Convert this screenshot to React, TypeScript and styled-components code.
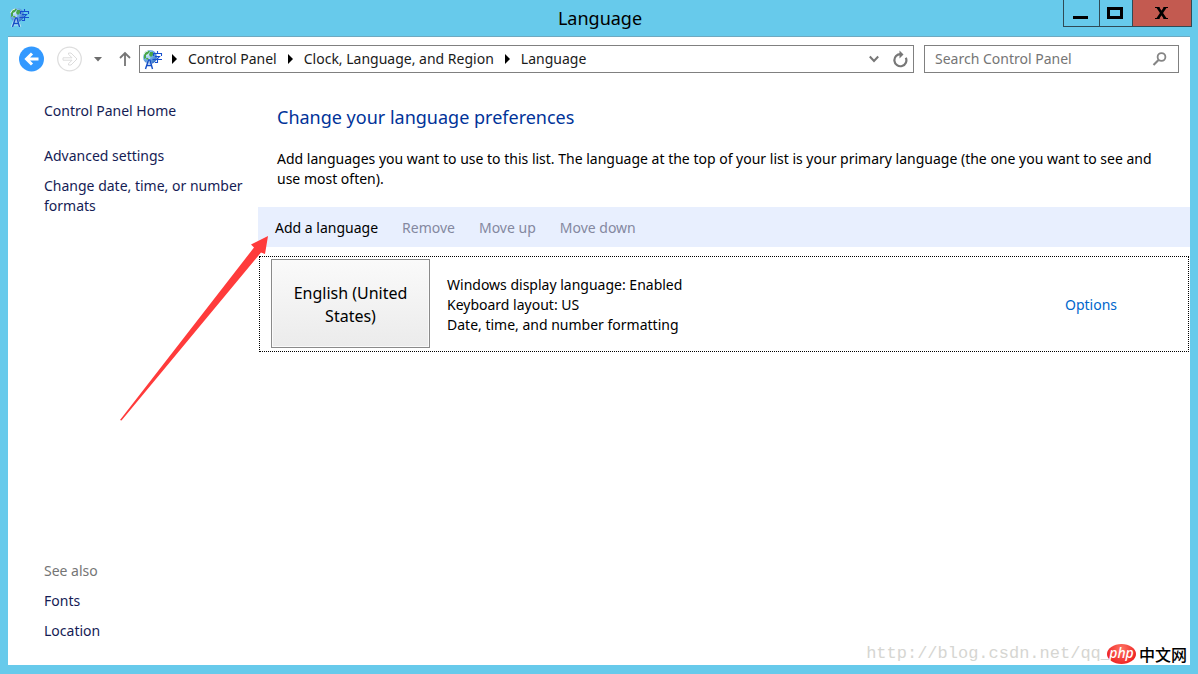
import React from "react";
import styled, { createGlobalStyle } from "styled-components";

const GlobalStyle = createGlobalStyle`
  *, *::before, *::after { box-sizing: border-box; }
  body {
    margin: 0;
    background: #67caeb;
    font-family: "Noto Sans", "Open Sans", "Noto Sans CJK SC", sans-serif;
    font-size: 14px;
    line-height: 20px;
    color: #000;
  }
  button, input { font: inherit; color: inherit; }
  button { padding: 0; border: 0; background: none; cursor: pointer; }
  p, h1, h2, ul { margin: 0; padding: 0; font-weight: 400; }
  ul { list-style: none; }
  svg { display: block; }
`;

const Window = styled.div`
  position: relative;
  display: flex;
  flex-direction: column;
  min-height: 100vh;
  padding: 0 8px 9px;
  background: #67caeb;
`;

const TitleBar = styled.header`
  display: grid;
  grid-template-columns: 1fr auto 1fr;
  align-items: start;
  height: 36px;
  margin-right: -2px;
`;

const TitleIcon = styled.div`
  padding: 7px 0 0 1px;
`;

const WindowTitle = styled.h1`
  font-size: 18px;
  line-height: 36px;
`;

const WindowControls = styled.div`
  display: flex;
  justify-self: end;
  height: 27px;
  border: 1px solid #2f4a55;
  border-top: 0;
`;

const ControlButton = styled.button<{ $width: number; $danger?: boolean }>`
  display: flex;
  align-items: center;
  justify-content: center;
  width: ${(p) => p.$width}px;
  padding-right: 2px;
  background: ${(p) => (p.$danger ? "#c35a50" : "transparent")};

  & + & { border-left: 1px solid #2f4a55; }
`;

const Panel = styled.div`
  flex: 1;
  display: flex;
  flex-direction: column;
  background: #fff;
  border-top: 1px solid #6fa9c0;
`;

const NavBar = styled.nav`
  display: flex;
  align-items: center;
  padding: 8px 11px 0;
`;

const NavButton = styled.button<{ $gap: number }>`
  margin-right: ${(p) => p.$gap}px;
`;

const AddressBar = styled.div`
  flex: 1;
  display: flex;
  align-items: center;
  height: 28px;
  padding: 0 5px 0 2px;
  border: 1px solid #808080;
`;

const Crumbs = styled.ul`
  flex: 1;
  display: flex;
  gap: 2px;
`;

const Crumb = styled.li`
  display: flex;
  align-items: center;

  svg { margin: 0 10px 0 9px; }
`;

const CrumbLink = styled.a`
  color: #1a1a1a;
  text-decoration: none;
`;

const AddressButton = styled.button`
  margin-left: 13px;
`;

const SearchBox = styled.label`
  display: flex;
  align-items: center;
  width: 255px;
  height: 28px;
  margin-left: 10px;
  padding: 0 10px;
  border: 1px solid #808080;
`;

const SearchInput = styled.input`
  flex: 1;
  min-width: 0;
  padding: 0;
  border: 0;
  outline: 0;
  background: transparent;

  &::placeholder { color: #757575; opacity: 1; }
`;

const Body = styled.div`
  flex: 1;
  display: grid;
  grid-template-columns: 250px 1fr;
`;

const Sidebar = styled.aside`
  display: flex;
  flex-direction: column;
  justify-content: space-between;
  padding: 28px 8px 24px 36px;
`;

const LinkGroup = styled.div`
  display: flex;
  flex-direction: column;
  align-items: flex-start;
  gap: 10px;
`;

const SideLink = styled.a<{ $lead?: boolean }>`
  margin-bottom: ${(p) => (p.$lead ? 15 : 0)}px;
  color: #151c55;
  text-decoration: none;
`;

const SeeAlso = styled.h2`
  font-size: 14px;
  color: #757575;
`;

const Main = styled.main`
  padding-top: 30px;
`;

const Intro = styled.div`
  padding: 0 28px 18px 19px;
`;

const Heading = styled.h2`
  margin-bottom: 18px;
  font-size: 18px;
  line-height: 28px;
  color: #003399;
`;

const Toolbar = styled.div`
  display: flex;
  gap: 24px;
  height: 40px;
  padding: 2px 0 0 17px;
  background: #e8effe;
`;

const ToolButton = styled.button`
  &:disabled { color: #8488a0; cursor: default; }
`;

const LanguageRow = styled.section`
  display: flex;
  align-items: center;
  margin: 9px 1px 0;
  padding: 2px 71px 3px 11px;
  border: 1px dotted #000;
`;

const LanguageTile = styled.div`
  display: flex;
  align-items: center;
  width: 159px;
  height: 89px;
  margin-right: 17px;
  padding: 2px 16px 0;
  border: 1px solid #8a8a8a;
  box-shadow: inset 0 0 0 1px #fafafa;
  background: linear-gradient(#fafafa, #ebebeb);
  font-size: 16px;
  line-height: 23px;
  text-align: center;
`;

const Details = styled.div`
  flex: 1;
  padding-top: 2px;
`;

const OptionsLink = styled.a`
  padding-top: 2px;
  color: #0066cc;
  text-decoration: none;
`;

const Pointer = styled.svg`
  position: absolute;
  left: 118px;
  top: 234px;
  pointer-events: none;
`;

const Watermark = styled.div`
  position: absolute;
  right: 11px;
  bottom: 8px;
  display: flex;
  align-items: center;
  pointer-events: none;
`;

const WatermarkUrl = styled.span`
  margin-right: -4px;
  font-family: "Liberation Mono", monospace;
  font-size: 17px;
  line-height: 24px;
  color: #d6d6d2;
`;

const Badge = styled.span`
  z-index: 1;
  width: 29px;
  height: 20px;
  border-radius: 50%;
  background: radial-gradient(ellipse at 50% 25%, #ff7464, #ee2424 75%);
  color: #fff;
  font-size: 14px;
  font-style: italic;
  font-weight: 500;
  line-height: 17px;
  text-align: center;
`;

const SiteName = styled.span`
  margin-left: 3px;
  font-family: "Noto Sans CJK SC", sans-serif;
  font-size: 16px;
  font-weight: 500;
  line-height: 24px;
`;

const LanguageIcon = ({ id }: { id: string }) => (
  <svg width="21" height="21" viewBox="0 0 21 21" aria-hidden="true">
    <defs>
      <radialGradient id={id} cx="30%" cy="30%" r="75%">
        <stop offset="0" stopColor="#e4f6ff" />
        <stop offset="0.45" stopColor="#7ab8ec" />
        <stop offset="1" stopColor="#3572c8" />
      </radialGradient>
    </defs>
    <circle cx="8" cy="8" r="7" fill={`url(#${id})`} />
    <path d="M2 5Q4 1 8 2L6 5 4 6 4 9 2 10ZM8 3l3 0 0 3-2 2-2-2ZM4 9l3 0 0 2-2 0Z" fill="#49a64a" />
    <path d="M1.500 6Q3 2 6 2" stroke="#dff4ef" fill="none" />
    <path d="M3 20 7 11 11 20M5 17h5" fill="none" stroke="#fff" strokeWidth="3" opacity=".5" />
    <path d="M3.500 20 6.500 11h1.500L10.500 20M5 16.500h5" fill="none" stroke="#154fc7" strokeWidth="1.400" />
    <path d="M15.500 2v2M11.500 7V4.500H19.500V7M13 7.500h4.500L15.500 9.500V13.500h-2.500M10.500 10.500H20" fill="none" stroke="#164fce" strokeWidth="1.100" />
  </svg>
);

const CrumbArrow = () => (
  <svg width="6" height="10" viewBox="0 0 6 10" aria-hidden="true">
    <path d="M0 0 5 5 0 10Z" fill="#000" />
  </svg>
);

const crumbs = ["Control Panel", "Clock, Language, and Region", "Language"];
const actions = ["Remove", "Move up", "Move down"];

export default function App() {
  return (
    <>
      <GlobalStyle />
      <Window>
        <TitleBar>
          <TitleIcon><LanguageIcon id="globe-title" /></TitleIcon>
          <WindowTitle>Language</WindowTitle>
          <WindowControls>
            <ControlButton $width={35} aria-label="Minimize">
              <svg width="15" height="12" viewBox="0 0 15 12"><path d="M0 10.500h15" stroke="#000" strokeWidth="3" /></svg>
            </ControlButton>
            <ControlButton $width={33} aria-label="Maximize">
              <svg width="16" height="12" viewBox="0 0 16 12"><path d="M1.500 1.500h13v9h-13z" fill="none" stroke="#000" strokeWidth="3" /></svg>
            </ControlButton>
            <ControlButton $width={59} $danger aria-label="Close">
              <svg width="13" height="12" viewBox="0 0 13 12">
                <path d="M2.500 0 10.500 12M10.500 0 2.500 12" stroke="#000" strokeWidth="2.600" />
                <path d="M0 .5h4.500M8.500 .5H13M0 11.500h4.500M8.500 11.500H13" stroke="#000" />
              </svg>
            </ControlButton>
          </WindowControls>
        </TitleBar>

        <Panel>
          <NavBar>
            <NavButton $gap={13} aria-label="Back">
              <svg width="25" height="26" viewBox="0 0 25 26">
                <circle cx="12.500" cy="13" r="12.500" fill="#3399ff" />
                <path d="M19.500 13H8M13 7.500 7.500 13l5.500 5.500" fill="none" stroke="#fff" strokeWidth="3" />
              </svg>
            </NavButton>
            <NavButton $gap={12} aria-label="Forward">
              <svg width="25" height="26" viewBox="0 0 25 26">
                <circle cx="12.500" cy="13" r="11.800" fill="none" stroke="#dedede" strokeWidth="1.300" />
                <path d="M6 11.800h9L11.500 8.300V7H14l6 6-6 6h-2.500v-1.300l3.500-3.500H6Z" fill="none" stroke="#dcdcdc" />
              </svg>
            </NavButton>
            <NavButton $gap={17} aria-label="Recent locations">
              <svg width="8" height="5" viewBox="0 0 8 5"><path d="M0 0h8L4 4.500Z" fill="#6d6d6d" /></svg>
            </NavButton>
            <NavButton $gap={8} aria-label="Up">
              <svg width="12" height="16" viewBox="0 0 12 16">
                <path d="M6 15V2M1 7l5-5 5 5" fill="none" stroke="#757575" strokeWidth="1.800" />
              </svg>
            </NavButton>
            <AddressBar>
              <LanguageIcon id="globe-address" />
              <Crumbs>
                {crumbs.map((name) => (
                  <Crumb key={name}>
                    <CrumbArrow />
                    <CrumbLink href="#">{name}</CrumbLink>
                  </Crumb>
                ))}
              </Crumbs>
              <AddressButton aria-label="Previous locations">
                <svg width="10" height="8" viewBox="0 0 10 8"><path d="M.8 1.500 5 6 9.200 1.500" fill="none" stroke="#777" strokeWidth="2" /></svg>
              </AddressButton>
              <AddressButton aria-label="Refresh">
                <svg width="16" height="18" viewBox="0 0 16 18">
                  <path d="M13.200 6.500A6 6 0 1 1 7.500 4.200" fill="none" stroke="#777" strokeWidth="2.200" transform="rotate(12 8 10)" />
                  <path d="M7.500 .5 11.500 4.500 7.500 8.500Z" fill="#777" />
                </svg>
              </AddressButton>
            </AddressBar>
            <SearchBox>
              <SearchInput type="text" placeholder="Search Control Panel" aria-label="Search Control Panel" />
              <svg width="16" height="14" viewBox="0 0 16 14" aria-hidden="true">
                <circle cx="9.500" cy="5" r="3.900" fill="none" stroke="#858585" strokeWidth="1.800" />
                <path d="M6.500 8 1.500 13" stroke="#858585" strokeWidth="2.200" />
              </svg>
            </SearchBox>
          </NavBar>

          <Body>
            <Sidebar>
              <LinkGroup>
                <SideLink href="#" $lead>Control Panel Home</SideLink>
                <SideLink href="#">Advanced settings</SideLink>
                <SideLink href="#">Change date, time, or number formats</SideLink>
              </LinkGroup>
              <LinkGroup>
                <SeeAlso>See also</SeeAlso>
                <SideLink href="#">Fonts</SideLink>
                <SideLink href="#">Location</SideLink>
              </LinkGroup>
            </Sidebar>

            <Main>
              <Intro>
                <Heading>Change your language preferences</Heading>
                <p>
                  Add languages you want to use to this list. The language at the top of your list is your
                  primary language (the one you want to see and use most often).
                </p>
              </Intro>
              <Toolbar>
                <ToolButton>Add a language</ToolButton>
                {actions.map((label) => (
                  <ToolButton key={label} disabled>{label}</ToolButton>
                ))}
              </Toolbar>
              <LanguageRow>
                <LanguageTile>English (United States)</LanguageTile>
                <Details>
                  <p>Windows display language: Enabled</p>
                  <p>Keyboard layout: US</p>
                  <p>Date, time, and number formatting</p>
                </Details>
                <OptionsLink href="#">Options</OptionsLink>
              </LanguageRow>
            </Main>
          </Body>
        </Panel>

        <Pointer width="152" height="188" viewBox="0 0 152 188" aria-hidden="true">
          <path d="M150 2 133 10.500 136 13.500 2 186 3.500 186.500 143 18.500 147 20Z" fill="#ff3b3b" />
        </Pointer>
        <Watermark>
          <WatermarkUrl>http://blog.csdn.net/qq_</WatermarkUrl>
          <Badge>php</Badge>
          <SiteName>中文网</SiteName>
        </Watermark>
      </Window>
    </>
  );
}
